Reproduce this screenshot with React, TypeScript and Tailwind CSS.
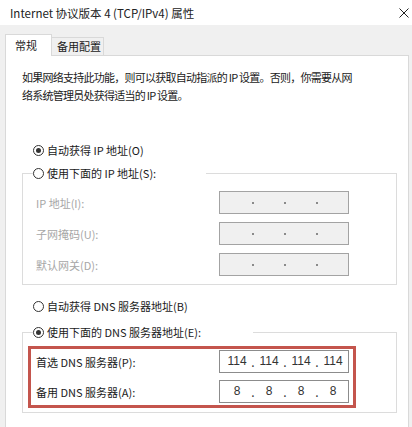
import { Fragment } from 'react';

function Radio({ checked }: { checked?: boolean }) {
    return (
        <span className="w-[11px] h-[11px] rounded-full border border-[#333] bg-white flex items-center justify-center shrink-0">
            {checked && <span className="w-[5px] h-[5px] rounded-full bg-[#333]" />}
        </span>
    );
}

function IpBox({ values }: { values?: string[] }) {
    const disabled = !values;
    const parts = values ?? ['', '', '', ''];
    return (
        <div
            className={`flex items-center h-[23px] w-[130px] pl-[3px] border ${
                disabled ? 'bg-[#f0f0f0] border-[#a3a3a3]' : 'bg-white border-[#8c8c8c]'
            }`}
        >
            {parts.map((v, i) => (
                <Fragment key={i}>
                    {i > 0 &&
                        (disabled ? (
                            <span className="w-[4px] flex justify-center">
                                <span className="w-[2px] h-[2px] bg-[#8a8a8a]" />
                            </span>
                        ) : (
                            <span className="w-[4px] text-center text-[12px] leading-[23px] text-[#333]">.</span>
                        ))}
                    <span className="w-[28px] text-center font-['Liberation_Sans',sans-serif] text-[12px] leading-[23px] text-[#333]">
                        {v}
                    </span>
                </Fragment>
            ))}
        </div>
    );
}

function IpRow({ label, values }: { label: string; values?: string[] }) {
    return (
        <div className="flex items-center h-[23px]">
            <span className={`w-[183px] ${values ? 'text-[#1a1a1a]' : 'text-[#a6a6a6]'}`}>{label}</span>
            <IpBox values={values} />
        </div>
    );
}

export default function App() {
    return (
        <div className="w-[412px] h-[427px] overflow-hidden bg-[#f0f0f0] font-['Noto_Sans_CJK_SC',sans-serif] text-[11px] leading-[18px] text-[#1a1a1a]">
            {/* Title bar */}
            <div className="h-[25px] bg-white flex items-center justify-between pl-[10px] pr-[2px]">
                <span className="text-[11.5px] text-[#222]">Internet 协议版本 4 (TCP/IPv4) 属性</span>
                <svg width="10" height="10" viewBox="0 0 10 10" className="mr-[1px]">
                    <path d="M0.5 0.5 L9.5 9.5 M9.5 0.5 L0.5 9.5" stroke="#222" strokeWidth="1" />
                </svg>
            </div>

            <div className="pt-[9px] pl-[5px] pr-[3px]">
                {/* Tabs */}
                <div className="flex items-end h-[22px]">
                    <div className="h-[22px] w-[47px] bg-white border border-b-0 border-[#d9d9d9] pl-[9px] leading-[20px]">常规</div>
                    <div className="h-[19px] w-[52px] border border-l-0 border-[#d9d9d9] pl-[5px] leading-[17px]">备用配置</div>
                    <div className="flex-1 h-[19px] border-b border-[#d9d9d9]" />
                </div>

                {/* Panel */}
                <div className="h-[400px] bg-white border border-t-0 border-[#d9d9d9] pl-[16px] pr-[11px] pt-[12px]">
                    <p className="whitespace-nowrap tracking-[-0.75px]">
                        如果网络支持此功能，则可以获取自动指派的 IP 设置。否则，你需要从网
                        <br />
                        络系统管理员处获得适当的 IP 设置。
                    </p>

                    <div className="mt-[37px] h-[18px] flex items-center gap-[3px] pl-[11px]">
                        <Radio checked />
                        <span>自动获得 IP 地址(O)</span>
                    </div>

                    <fieldset className="mt-[5px] border border-[#dcdcdc] pl-[10px] pr-[10px] pt-[9px] pb-[8px]">
                        <legend className="w-[173px] h-[18px] flex items-center gap-[3px]">
                            <Radio />
                            <span>使用下面的 IP 地址(S):</span>
                        </legend>
                        <div className="pl-[3px] flex flex-col gap-[8px]">
                            <IpRow label="IP 地址(I):" />
                            <IpRow label="子网掩码(U):" />
                            <IpRow label="默认网关(D):" />
                        </div>
                    </fieldset>

                    <div className="mt-[12px] h-[18px] flex items-center gap-[3px] pl-[11px]">
                        <Radio />
                        <span>自动获得 DNS 服务器地址(B)</span>
                    </div>

                    <fieldset className="mt-[8px] border border-[#dcdcdc] pl-[10px] pr-[10px] pt-[5px] pb-[4px]">
                        <legend className="w-[220px] h-[18px] flex items-center gap-[3px]">
                            <Radio checked />
                            <span>使用下面的 DNS 服务器地址(E):</span>
                        </legend>
                        <div className="-ml-[5px] w-[328px] border-[3px] border-[#c4554d] pl-[5px] pt-[1px] pb-[2px] flex flex-col gap-[7px]">
                            <IpRow label="首选 DNS 服务器(P):" values={['114', '114', '114', '114']} />
                            <IpRow label="备用 DNS 服务器(A):" values={['8', '8', '8', '8']} />
                        </div>
                    </fieldset>
                </div>
            </div>
        </div>
    );
}
